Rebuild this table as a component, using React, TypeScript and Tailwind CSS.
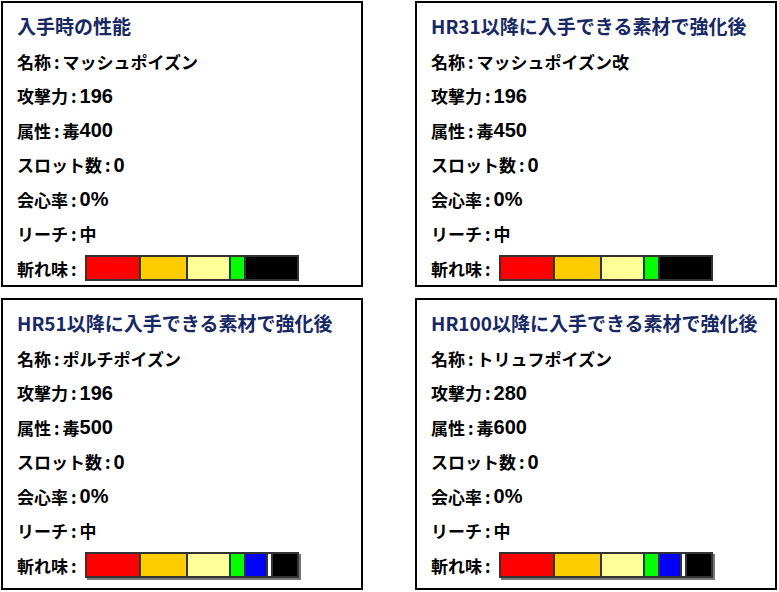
import React from "react";

type Seg = { color: string; w: string };

const sharp1: Seg[] = [
  { color: "bg-[#ff0000]", w: "w-[54px]" },
  { color: "bg-[#ffcc00]", w: "w-[47px]" },
  { color: "bg-[#ffff99]", w: "w-[43px]" },
  { color: "bg-[#00ff00]", w: "w-[15px]" },
  { color: "bg-black", w: "flex-1" },
];

const sharp2: Seg[] = [
  { color: "bg-[#ff0000]", w: "w-[54px]" },
  { color: "bg-[#ffcc00]", w: "w-[47px]" },
  { color: "bg-[#ffff99]", w: "w-[43px]" },
  { color: "bg-[#00ff00]", w: "w-[15px]" },
  { color: "bg-[#0000ff]", w: "w-[22px]" },
  { color: "bg-white", w: "w-[5px]" },
  { color: "bg-black", w: "flex-1" },
];

const cards = [
  { title: "入手時の性能", name: "マッシュポイズン", atk: "196", attr: "400", sharp: sharp1, shadow: false },
  { title: "HR31以降に入手できる素材で強化後", name: "マッシュポイズン改", atk: "196", attr: "450", sharp: sharp1, shadow: false },
  { title: "HR51以降に入手できる素材で強化後", name: "ポルチポイズン", atk: "196", attr: "500", sharp: sharp2, shadow: true },
  { title: "HR100以降に入手できる素材で強化後", name: "トリュフポイズン", atk: "280", attr: "600", sharp: sharp2, shadow: true },
];

const Num = ({ children }: { children: React.ReactNode }) => (
  <span className="font-['Liberation_Sans'] text-[20px] font-bold">{children}</span>
);

const Colon = () => <span className="px-[3px]">:</span>;

const Row = ({ children }: { children: React.ReactNode }) => (
  <div className="h-[34.5px] flex items-center whitespace-nowrap">{children}</div>
);

const Bar = ({ segs, shadow }: { segs: Seg[]; shadow: boolean }) => (
  <div
    className={
      "ml-[5px] w-[214px] h-[26px] flex border-2 border-[#333] " +
      (shadow ? "shadow-[2px_2px_0_#777]" : "")
    }
  >
    {segs.map((s, i) => (
      <div
        key={i}
        className={s.color + " " + s.w + (i < segs.length - 1 ? " border-r-2 border-[#333]" : "")}
      />
    ))}
  </div>
);

const Card = ({ c, tall }: { c: (typeof cards)[number]; tall: boolean }) => (
  <div className={"border-2 border-black bg-white pl-[14px] pt-[5px] " + (tall ? "h-[292px]" : "h-[286px]")}>
    <div className="h-[36px] flex items-center text-[19px] font-bold text-[#172863] whitespace-nowrap">
      {c.title}
    </div>
    <Row>
      名称<Colon />
      {c.name}
    </Row>
    <Row>
      攻撃力<Colon />
      <Num>{c.atk}</Num>
    </Row>
    <Row>
      属性<Colon />毒<Num>{c.attr}</Num>
    </Row>
    <Row>
      スロット数<Colon />
      <Num>0</Num>
    </Row>
    <Row>
      会心率<Colon />
      <Num>0%</Num>
    </Row>
    <Row>
      リーチ<Colon />中
    </Row>
    <Row>
      斬れ味<Colon />
      <Bar segs={c.sharp} shadow={c.shadow} />
    </Row>
  </div>
);

export default function App() {
  return (
    <div className="w-[779px] h-[592px] bg-white pl-[1px] pt-[1px] font-['Noto_Sans_CJK_JP',sans-serif] text-[17px] font-bold text-black">
      <div className="grid grid-cols-[362px_362px] gap-x-[52px] gap-y-[11px]">
        {cards.map((c, i) => (
          <Card key={i} c={c} tall={i >= 2} />
        ))}
      </div>
    </div>
  );
}
